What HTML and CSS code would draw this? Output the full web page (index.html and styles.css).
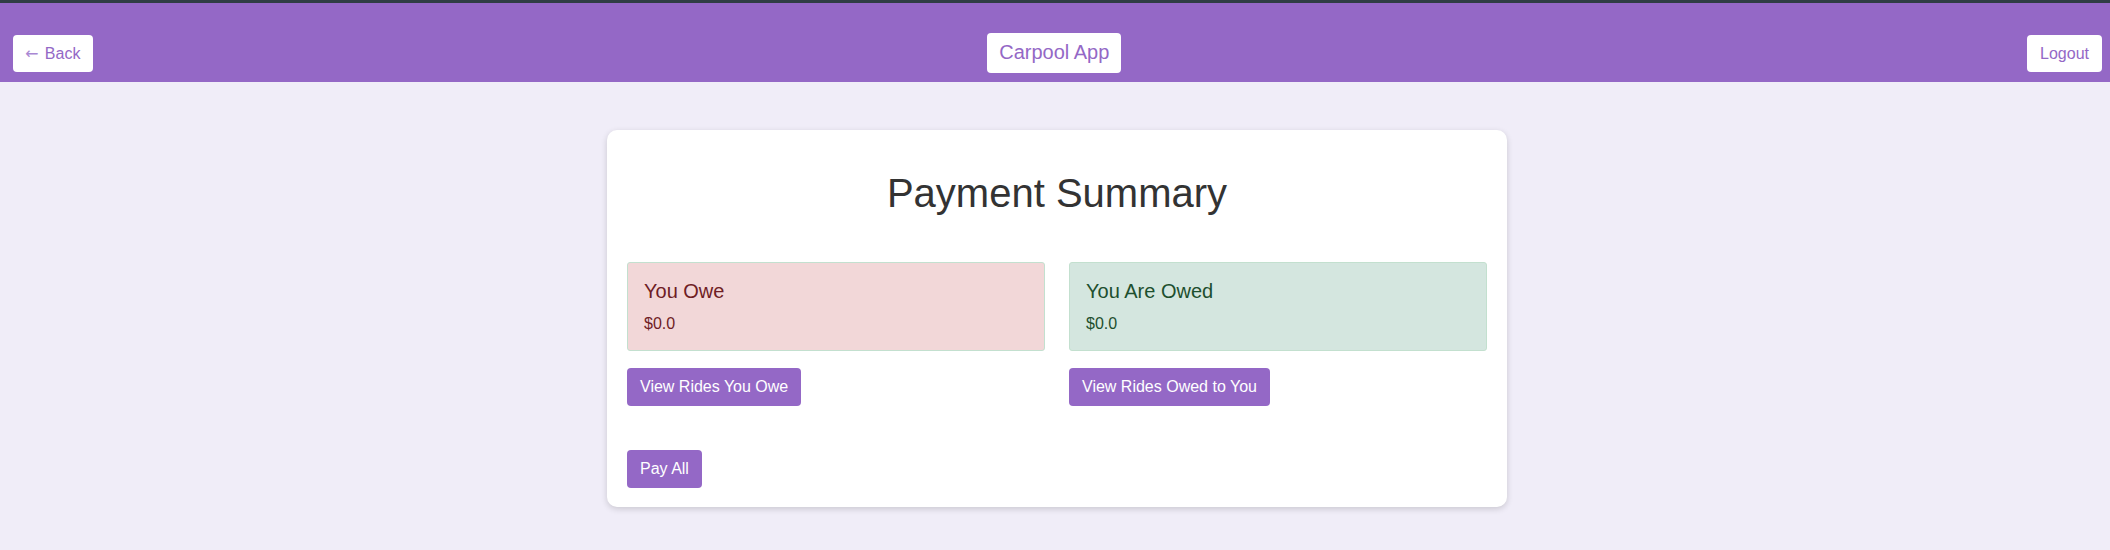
FILE: index.html
```html
<!DOCTYPE html>
<html lang="en">
<head>
<meta charset="utf-8">
<title>Carpool App</title>
<link rel="stylesheet" href="styles.css">
</head>
<body>
<header class="topbar">
  <button class="nav-btn back-btn"><span class="arrow">&#8592;</span> Back</button>
  <button class="nav-btn brand-btn">Carpool App</button>
  <button class="nav-btn">Logout</button>
</header>
<main class="page">
  <section class="card">
    <h1 class="title">Payment Summary</h1>
    <div class="cols">
      <div class="col">
        <div class="summary owe">
          <h3 class="summary-title">You Owe</h3>
          <p class="summary-amount">$0.0</p>
        </div>
        <button class="action-btn">View Rides You Owe</button>
      </div>
      <div class="col">
        <div class="summary owed">
          <h3 class="summary-title">You Are Owed</h3>
          <p class="summary-amount">$0.0</p>
        </div>
        <button class="action-btn">View Rides Owed to You</button>
      </div>
    </div>
    <div class="pay-row">
      <button class="action-btn">Pay All</button>
    </div>
  </section>
</main>
</body>
</html>
```
FILE: styles.css
```css
* { box-sizing: border-box; }
html, body { margin: 0; padding: 0; }
body {
  background: #f0edf8;
  font-family: "Liberation Sans", Arial, sans-serif;
  color: #333;
  min-height: 550px;
}
.topbar {
  border-top: 3px solid #2f3d44;
  background: #9468c6;
  height: 82px;
  padding: 30px 8px 9px 13px;
  display: flex;
  justify-content: space-between;
  align-items: center;
}
.nav-btn {
  background: #fff;
  border: none;
  border-radius: 4px;
  color: #9468c6;
  font-family: "Liberation Sans", Arial, sans-serif;
  font-size: 16px;
  line-height: 18px;
  padding: 10px 13px;
  height: 37px;
  cursor: pointer;
}
.back-btn { padding-left: 12px; }
.back-btn .arrow {
  display: inline-block;
  font-family: "DejaVu Sans", sans-serif;
  font-size: 16px;
  margin-right: 2px;
  color: #a987d3;
}
.brand-btn {
  font-size: 20px;
  line-height: 23px;
  padding: 8px 12px 9px;
  height: 40px;
  margin-right: 12px;
}
.page {
  padding-top: 48px;
  display: flex;
  justify-content: center;
}
.card {
  width: 900px;
  margin-left: 4px;
  background: #fff;
  border-radius: 10px;
  box-shadow: 0 2px 6px rgba(0, 0, 0, 0.16);
  padding: 20px 20px 19px;
}
.title {
  margin: 20px 0 46px;
  text-align: center;
  font-size: 40px;
  line-height: 46px;
  font-weight: normal;
  color: #333;
}
.cols {
  display: grid;
  grid-template-columns: 1fr 1fr;
  gap: 24px;
}
.col {
  display: flex;
  flex-direction: column;
  align-items: flex-start;
  gap: 17px;
}
.summary {
  width: 100%;
  height: 89px;
  border: 1px solid #c3e0cf;
  border-radius: 3px;
  padding: 17px 16px 18px;
}
.owe { background: #f2d7d8; color: #6f1d25; }
.owed { background: #d4e6df; color: #1d4f2e; }
.summary-title {
  margin: 0 0 12px;
  font-size: 20px;
  line-height: 23px;
  font-weight: normal;
}
.summary-amount {
  margin: 0;
  font-size: 16px;
  line-height: 18px;
}
.action-btn {
  background: #9468c6;
  color: #fff;
  border: none;
  border-radius: 4px;
  font-family: "Liberation Sans", Arial, sans-serif;
  font-size: 16px;
  line-height: 18px;
  padding: 10px 13px;
  height: 38px;
  cursor: pointer;
}
.pay-row {
  margin-top: 44px;
}
```
